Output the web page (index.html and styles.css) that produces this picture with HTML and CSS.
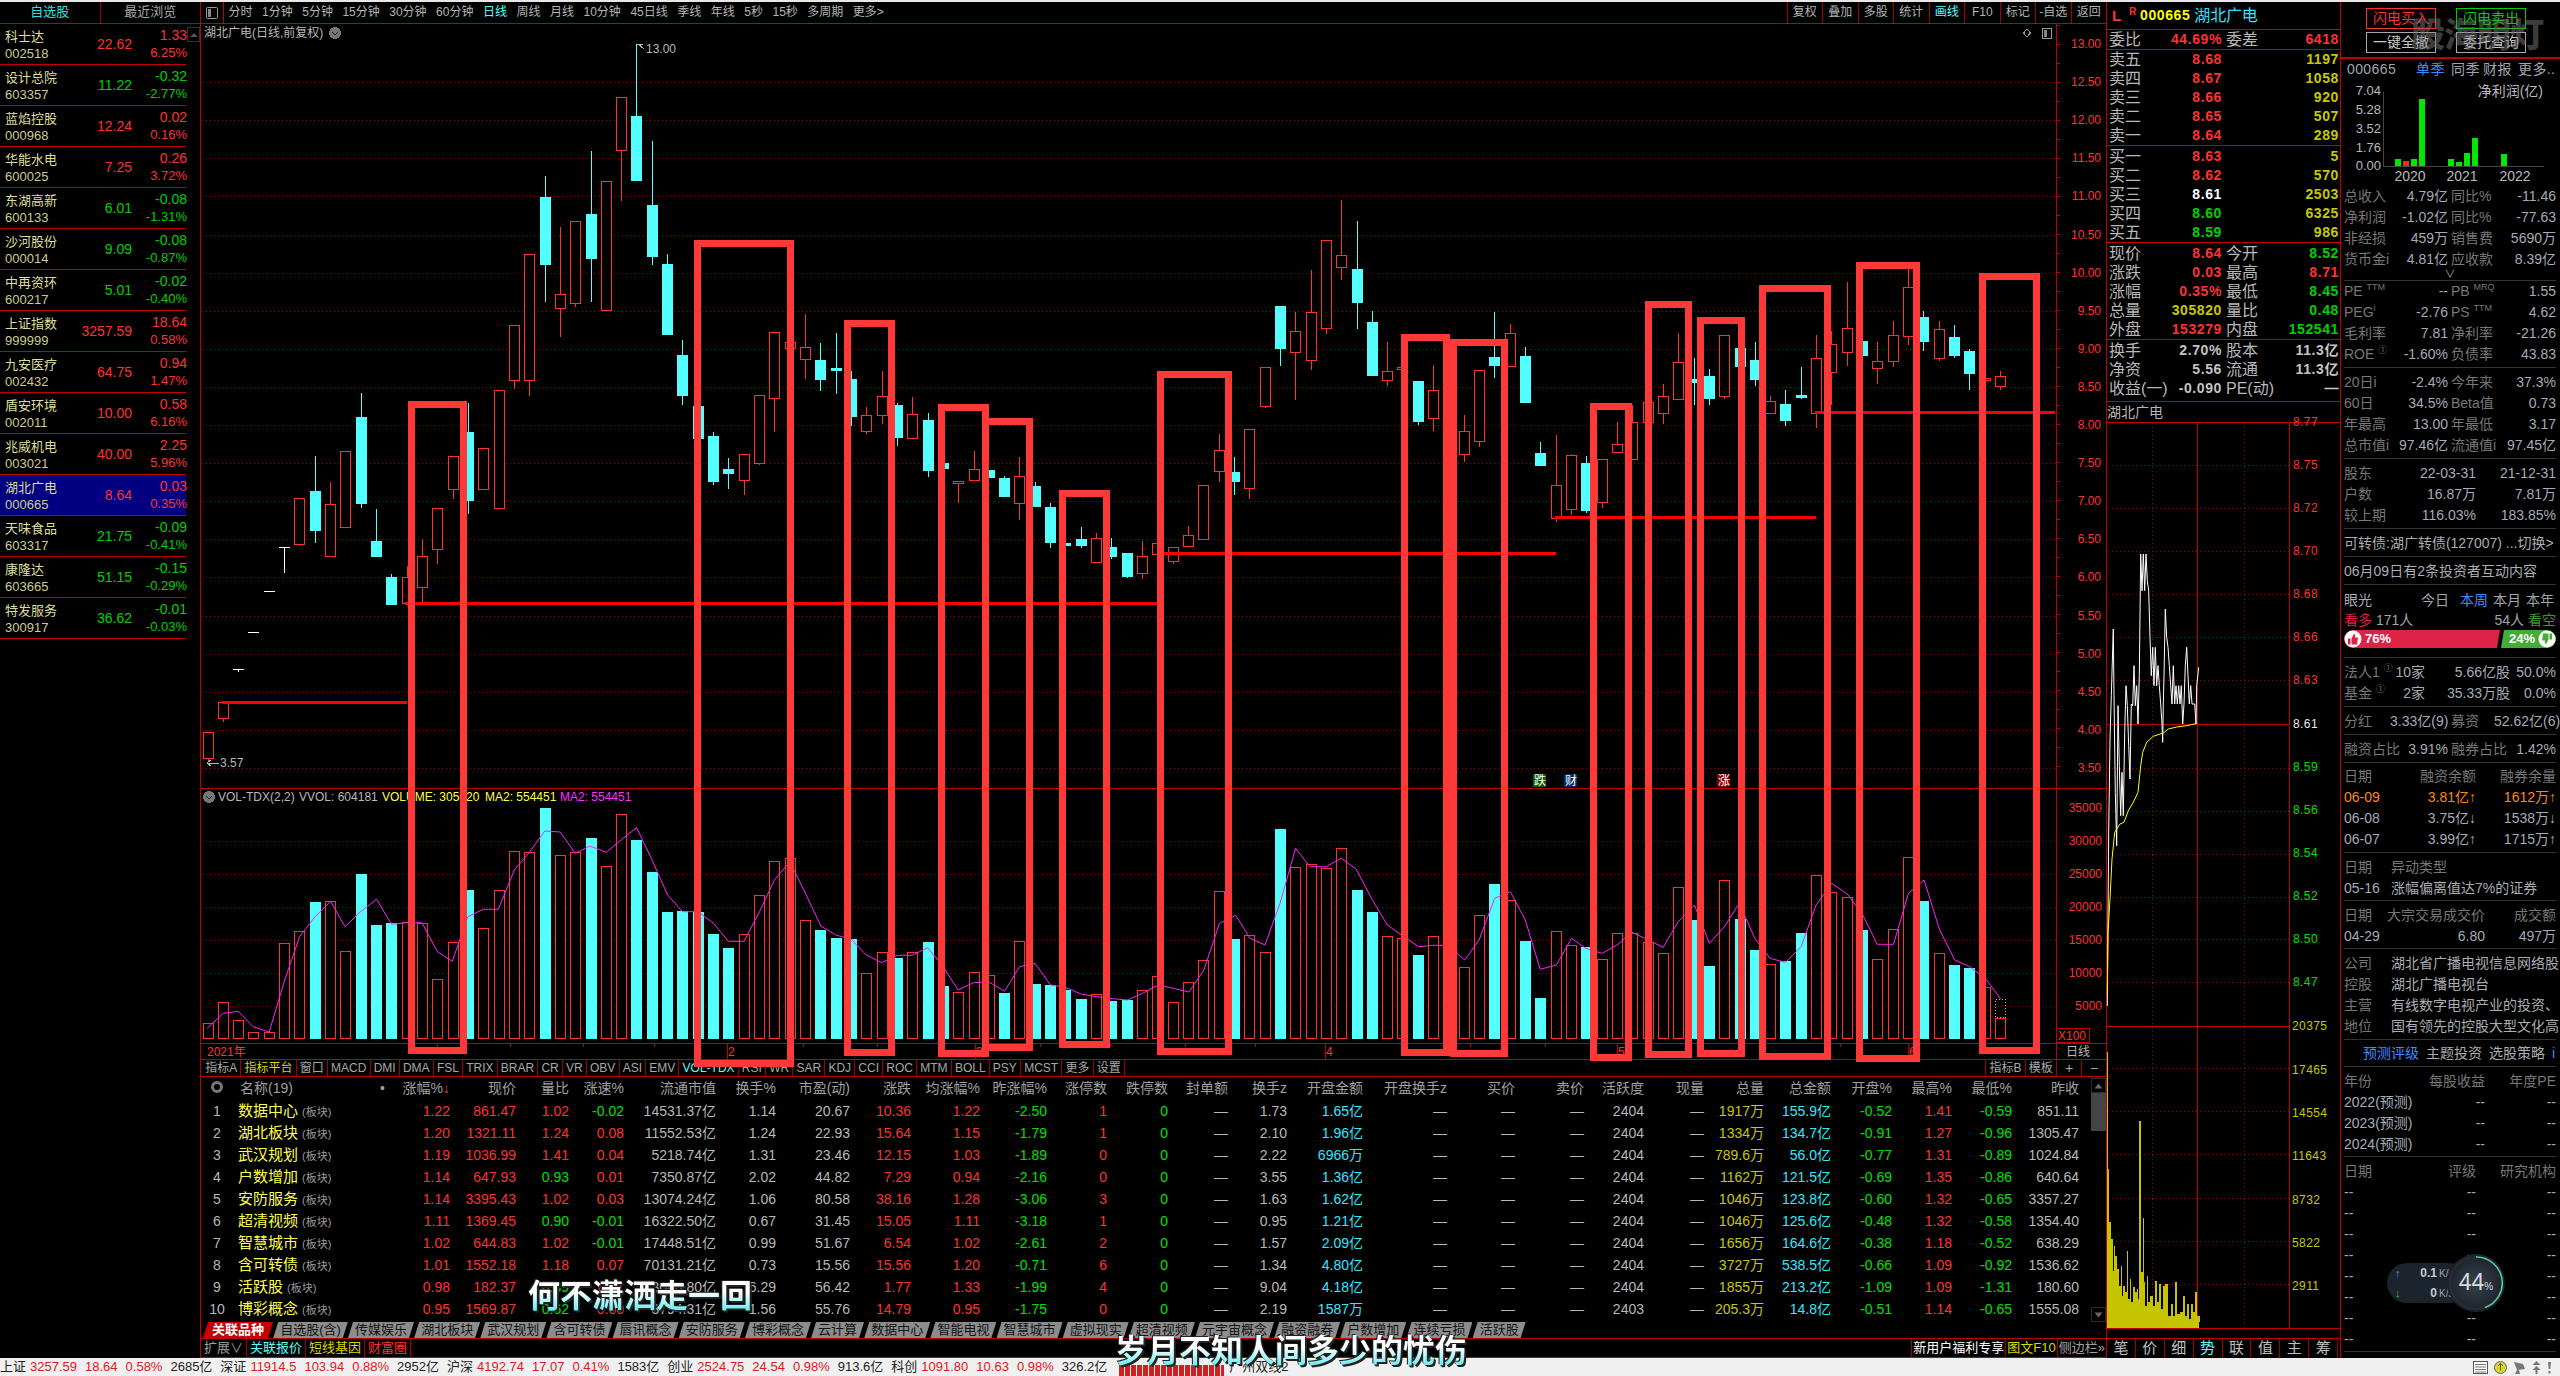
FILE: index.html
```html
<!DOCTYPE html>
<html lang="zh-CN">
<head>
<meta charset="utf-8">
<title>湖北广电 000665</title>
<link rel="stylesheet" href="styles.css">
</head>
<body>
<div class="app">
  <div class="topline"></div>
  <div class="main">
    <aside class="watch">
      <div class="watch-head"><span class="on">自选股</span><span>最近浏览</span></div>
      <div class="watch-body">
        <div class="wr"><div class="wn"><i>科士达</i><u>002518</u></div><b class="r">22.62</b><div class="wc r"><em>1.33</em><s>6.25%</s></div></div>
        <div class="wr"><div class="wn"><i>设计总院</i><u>603357</u></div><b class="g">11.22</b><div class="wc g"><em>-0.32</em><s>-2.77%</s></div></div>
        <div class="wr"><div class="wn"><i>蓝焰控股</i><u>000968</u></div><b class="r">12.24</b><div class="wc r"><em>0.02</em><s>0.16%</s></div></div>
        <div class="wr"><div class="wn"><i>华能水电</i><u>600025</u></div><b class="r">7.25</b><div class="wc r"><em>0.26</em><s>3.72%</s></div></div>
        <div class="wr"><div class="wn"><i>东湖高新</i><u>600133</u></div><b class="g">6.01</b><div class="wc g"><em>-0.08</em><s>-1.31%</s></div></div>
        <div class="wr"><div class="wn"><i>沙河股份</i><u>000014</u></div><b class="g">9.09</b><div class="wc g"><em>-0.08</em><s>-0.87%</s></div></div>
        <div class="wr"><div class="wn"><i>中再资环</i><u>600217</u></div><b class="g">5.01</b><div class="wc g"><em>-0.02</em><s>-0.40%</s></div></div>
        <div class="wr"><div class="wn"><i>上证指数</i><u>999999</u></div><b class="r">3257.59</b><div class="wc r"><em>18.64</em><s>0.58%</s></div></div>
        <div class="wr"><div class="wn"><i>九安医疗</i><u>002432</u></div><b class="r">64.75</b><div class="wc r"><em>0.94</em><s>1.47%</s></div></div>
        <div class="wr"><div class="wn"><i>盾安环境</i><u>002011</u></div><b class="r">10.00</b><div class="wc r"><em>0.58</em><s>6.16%</s></div></div>
        <div class="wr"><div class="wn"><i>兆威机电</i><u>003021</u></div><b class="r">40.00</b><div class="wc r"><em>2.25</em><s>5.96%</s></div></div>
        <div class="wr sel"><div class="wn"><i>湖北广电</i><u>000665</u></div><b class="r">8.64</b><div class="wc r"><em>0.03</em><s>0.35%</s></div></div>
        <div class="wr"><div class="wn"><i>天味食品</i><u>603317</u></div><b class="g">21.75</b><div class="wc g"><em>-0.09</em><s>-0.41%</s></div></div>
        <div class="wr"><div class="wn"><i>康隆达</i><u>603665</u></div><b class="g">51.15</b><div class="wc g"><em>-0.15</em><s>-0.29%</s></div></div>
        <div class="wr"><div class="wn"><i>特发服务</i><u>300917</u></div><b class="g">36.62</b><div class="wc g"><em>-0.01</em><s>-0.03%</s></div></div>
      </div>
      <div class="mini-scroll"><svg width="10" height="6" viewBox="0 0 10 6"><path d="M1 5l4-4 4 4z" fill="#555"/></svg></div>
    </aside>

    <section class="center">
      <div class="toolbar">
        <div class="tb-left">
          <span class="tb-toggle"><svg width="12" height="12" viewBox="0 0 12 12"><rect x=".5" y=".5" width="11" height="11" rx="1" fill="none" stroke="#999"/><rect x="2" y="2" width="3" height="8" fill="#888"/></svg></span>
          <span>分时</span><span>1分钟</span><span>5分钟</span><span>15分钟</span><span>30分钟</span><span>60分钟</span><span class="on">日线</span><span>周线</span><span>月线</span><span>10分钟</span><span>45日线</span><span>季线</span><span>年线</span><span>5秒</span><span>15秒</span><span>多周期</span><span>更多&gt;</span>
        </div>
        <div class="tb-right"><span>复权</span><span>叠加</span><span>多股</span><span>统计</span><span class="on">画线</span><span>F10</span><span>标记</span><span>-自选</span><span>返回</span></div>
      </div>
      <svg id="chart" class="chart" width="1906" height="1035" viewBox="201 24 1906 1035"></svg>
      <div class="indtabs">
        <div class="ind-left"><span>指标A</span><span class="y">指标平台</span><span>窗口</span><span>MACD</span><span>DMI</span><span>DMA</span><span>FSL</span><span>TRIX</span><span>BRAR</span><span>CR</span><span>VR</span><span>OBV</span><span>ASI</span><span>EMV</span><span class="c">VOL-TDX</span><span>RSI</span><span>WR</span><span>SAR</span><span>KDJ</span><span>CCI</span><span>ROC</span><span>MTM</span><span>BOLL</span><span>PSY</span><span>MCST</span><span>更多</span><span>设置</span></div>
        <div class="ind-right"><span>指标B</span><span>模板</span><span class="pm">+</span><span class="pm">−</span></div>
      </div>
      <div class="tbl">
        <div id="rows" class="rows"></div>
        <div class="sb"><span class="sb-btn"><svg width="9" height="6" viewBox="0 0 9 6"><path d="M.5 5.5l4-5 4 5z" fill="#666"/></svg></span><span class="sb-thumb"></span><span class="sb-fill"></span><span class="sb-btn"><svg width="9" height="6" viewBox="0 0 9 6"><path d="M.5 .5l4 5 4-5z" fill="#666"/></svg></span></div>
      </div>
      <div class="sheet"><span class="act">关联品种</span><span>自选股(含)</span><span>传媒娱乐</span><span>湖北板块</span><span>武汉规划</span><span>含可转债</span><span>唇讯概念</span><span>安防服务</span><span>博彩概念</span><span>云计算</span><span>数据中心</span><span>智能电视</span><span>智慧城市</span><span>虚拟现实</span><span>超清视频</span><span>元宇宙概念</span><span>融资融券</span><span>户数增加</span><span>连续亏损</span><span>活跃股</span></div>
      <div class="lower">
        <div class="low-left"><span>扩展∨</span><span class="c">关联报价</span><span class="y">短线基因</span><span class="r">财富圈</span></div>
        <div class="low-right"><span class="w">新用户福利专享</span><span class="y box">图文F10</span><span>侧边栏»</span></div>
      </div>
    </section>

    <section class="quote">
      <div class="q-title"><em>L</em><sup>R</sup><b>000665</b><span>湖北广电</span></div>
      <div class="q-sec q-wb"><div class="qr"><span>委比</span><b class="r">44.69%</b><span>委差</span><b class="r">6418</b></div></div>
      <div class="q-sec">
        <div class="qr"><span>卖五</span><b class="r">8.68</b><span></span><b class="ye">1197</b></div>
        <div class="qr"><span>卖四</span><b class="r">8.67</b><span></span><b class="ye">1058</b></div>
        <div class="qr"><span>卖三</span><b class="r">8.66</b><span></span><b class="ye">920</b></div>
        <div class="qr"><span>卖二</span><b class="r">8.65</b><span></span><b class="ye">507</b></div>
        <div class="qr"><span>卖一</span><b class="r">8.64</b><span></span><b class="ye">289</b></div>
      </div>
      <div class="q-sec q-pad">
        <div class="qr"><span>买一</span><b class="r">8.63</b><span></span><b class="ye">5</b></div>
        <div class="qr"><span>买二</span><b class="r">8.62</b><span></span><b class="ye">570</b></div>
        <div class="qr"><span>买三</span><b class="w">8.61</b><span></span><b class="ye">2503</b></div>
        <div class="qr"><span>买四</span><b class="g">8.60</b><span></span><b class="ye">6325</b></div>
        <div class="qr"><span>买五</span><b class="g">8.59</b><span></span><b class="ye">986</b></div>
      </div>
      <div class="q-sec q-pad">
        <div class="qr"><span>现价</span><b class="r">8.64</b><span>今开</span><b class="g">8.52</b></div>
        <div class="qr"><span>涨跌</span><b class="r">0.03</b><span>最高</span><b class="r">8.71</b></div>
        <div class="qr"><span>涨幅</span><b class="r">0.35%</b><span>最低</span><b class="g">8.45</b></div>
        <div class="qr"><span>总量</span><b class="ye">305820</b><span>量比</span><b class="g">0.48</b></div>
        <div class="qr"><span>外盘</span><b class="r">153279</b><span>内盘</span><b class="g">152541</b></div>
      </div>
      <div class="q-sec q-last">
        <div class="qr"><span>换手</span><b class="n">2.70%</b><span>股本</span><b class="n">11.3亿</b></div>
        <div class="qr"><span>净资</span><b class="n">5.56</b><span>流通</span><b class="n">11.3亿</b></div>
        <div class="qr"><span>收益(一)</span><b class="n">-0.090</b><span>PE(动)</span><b class="n">—</b></div>
      </div>
      <div class="q-head">湖北广电</div>
      <svg id="ticks" class="ticks" width="233" height="915" viewBox="2107 424 233 915"></svg>
      <div class="q-tabs"><span>笔</span><span>价</span><span>细</span><span class="c">势</span><span>联</span><span>值</span><span>主</span><span>筹</span></div>
    </section>

    <aside class="info">
      <div class="btns">
        <span class="btn br">闪电买入</span><span class="btn bg">闪电卖出</span><span class="btn bn">一键全撤</span><span class="btn bn">委托查询</span>
      </div>
      <div class="sec s1">
        <div class="fin-head"><span>000665</span><span class="blue">单季</span><span>同季</span><span>财报</span><span>更多..</span></div>
        <svg class="fin" width="219" height="105" viewBox="2341 81 219 105">
          <g class="fin-y"><text x="2381" y="95">7.04</text><text x="2381" y="114">5.28</text><text x="2381" y="133">3.52</text><text x="2381" y="152">1.76</text><text x="2381" y="170">0.00</text></g>
          <text class="fin-t" x="2543" y="96">净利润(亿)</text>
          <path class="fin-ax" d="M2383.5 92V166.5H2544"/>
          <g class="fin-b"><rect x="2395" y="159" width="6" height="7"/><rect class="neg" x="2403" y="161" width="6" height="5"/><rect x="2411" y="159" width="6" height="7"/><rect x="2419" y="99" width="6" height="67"/><rect x="2448" y="159" width="6" height="7"/><rect x="2456" y="162" width="6" height="4"/><rect x="2464" y="153" width="6" height="13"/><rect x="2472" y="138" width="6" height="28"/><rect x="2501" y="154" width="6" height="12"/></g>
          <g class="fin-x"><text x="2410" y="181">2020</text><text x="2462" y="181">2021</text><text x="2515" y="181">2022</text></g>
        </svg>
        <div class="ir"><i>总收入</i><b>4.79亿</b><i>同比%</i><b>-11.46</b></div>
        <div class="ir"><i>净利润</i><b>-1.02亿</b><i>同比%</i><b>-77.63</b></div>
        <div class="ir"><i>非经损</i><b>459万</b><i>销售费</i><b>5690万</b></div>
        <div class="ir"><i>货币金i</i><b>4.81亿</b><i>应收款</i><b>8.39亿</b></div>
        <div class="chev">∨</div>
      </div>
      <div class="sec s2">
        <div class="ir"><i>PE <sup>TTM</sup></i><b>--</b><i>PB <sup>MRQ</sup></i><b>1.55</b></div>
        <div class="ir"><i>PEG<sup>i</sup></i><b>-2.76</b><i>PS <sup>TTM</sup></i><b>4.62</b></div>
        <div class="ir"><i>毛利率</i><b>7.81</b><i>净利率</i><b>-21.26</b></div>
        <div class="ir"><i>ROE <sup>①</sup></i><b>-1.60%</b><i>负债率</i><b>43.83</b></div>
      </div>
      <div class="sec">
        <div class="ir"><i>20日i</i><b>-2.4%</b><i>今年来</i><b>37.3%</b></div>
        <div class="ir"><i>60日</i><b>34.5%</b><i>Beta值</i><b>0.73</b></div>
        <div class="ir"><i>年最高</i><b>13.00</b><i>年最低</i><b>3.17</b></div>
        <div class="ir"><i>总市值i</i><b>97.46亿</b><i>流通值i</i><b>97.45亿</b></div>
      </div>
      <div class="sec">
        <div class="i3"><i>股东</i><b>22-03-31</b><b>21-12-31</b></div>
        <div class="i3"><i>户数</i><b>16.87万</b><b>7.81万</b></div>
        <div class="i3"><i>较上期</i><b>116.03%</b><b>183.85%</b></div>
      </div>
      <div class="sec"><div class="line lt">可转债:湖广转债(127007) ...切换&gt;</div></div>
      <div class="sec"><div class="line lt">06月09日有2条投资者互动内容</div></div>
      <div class="sec s7">
        <div class="eye"><span class="lt">眼光</span><span class="eye-tabs"><span>今日</span><span class="blue">本周</span><span>本月</span><span>本年</span></span></div>
        <div class="eye2"><span><em class="bull">看多</em> 171人</span><span>54人 <em class="bear">看空</em></span></div>
        <div class="vote">
          <div class="vote-l"><svg width="18" height="18" viewBox="0 0 18 18"><circle cx="9" cy="9" r="8.5" fill="#fff"/><path d="M4 8.5h2.5v6H4zM7.5 8.5l2.5-4.500q1.500 0 1.200 2L10.800 7.500H14l-1 7H7.500z" fill="#dc2345"/></svg>76%</div>
          <div class="vote-r">24%<svg width="18" height="18" viewBox="0 0 18 18"><circle cx="9" cy="9" r="8.500" fill="#fff"/><path d="M14 9.500h-2.500v-6H14zM10.500 9.500l-2.500 4.500q-1.500 0-1.200-2l.4-1.500H4l1-7h5.500z" fill="#45ad37"/></svg></div>
        </div>
      </div>
      <div class="sec">
        <div class="i5"><i>法人1 <sup>①</sup></i><b>10家</b><b>5.66亿股</b><b>50.0%</b></div>
        <div class="i5"><i>基金 <sup>①</sup></i><b>2家</b><b>35.33万股</b><b>0.0%</b></div>
      </div>
      <div class="sec"><div class="ir"><i>分红</i><b>3.33亿(9)</b><i>募资</i><b>52.62亿(6)</b></div></div>
      <div class="sec"><div class="iw"><i>融资占比</i><b>3.91%</b><i>融券占比</i><b>1.42%</b></div></div>
      <div class="sec s11">
        <div class="i3"><i>日期</i><i class="ra">融资余额</i><i class="ra">融券余量</i></div>
        <div class="i3 or"><b>06-09</b><b>3.81亿↑</b><b>1612万↑</b></div>
        <div class="i3"><b class="la">06-08</b><b>3.75亿↓</b><b>1538万↓</b></div>
        <div class="i3"><b class="la">06-07</b><b>3.99亿↑</b><b>1715万↑</b></div>
      </div>
      <div class="sec s12">
        <div class="il"><i>日期</i><i>异动类型</i></div>
        <div class="il"><b>05-16</b><span class="lt">涨幅偏离值达7%的证券</span></div>
      </div>
      <div class="sec s12">
        <div class="i4"><i>日期</i><i class="ra">大宗交易成交价</i><i class="ra">成交额</i></div>
        <div class="i4"><b class="la">04-29</b><b>6.80</b><b>497万</b></div>
      </div>
      <div class="sec">
        <div class="il"><i>公司</i><span class="lt">湖北省广播电视信息网络股..</span></div>
        <div class="il"><i>控股</i><span class="lt">湖北广播电视台</span></div>
        <div class="il"><i>主营</i><span class="lt">有线数字电视产业的投资、..</span></div>
        <div class="il"><i>地位</i><span class="lt">国有领先的控股大型文化高..</span></div>
      </div>
      <div class="sec s15"><div class="rate"><span class="blue">预测评级</span><span>主题投资</span><span>选股策略</span><span class="blue">i</span></div></div>
      <div class="sec s16">
        <div class="i4"><i>年份</i><i class="ra">每股收益</i><i class="ra">年度PE</i></div>
        <div class="i4"><b class="la">2022(预测)</b><b>--</b><b>--</b></div>
        <div class="i4"><b class="la">2023(预测)</b><b>--</b><b>--</b></div>
        <div class="i4"><b class="la">2024(预测)</b><b>--</b><b>--</b></div>
      </div>
      <div class="sec s16">
        <div class="i3"><i>日期</i><i class="ra">评级</i><i class="ra">研究机构</i></div>
        <div class="i3"><b class="la">--</b><b>--</b><b>--</b></div>
        <div class="i3"><b class="la">--</b><b>--</b><b>--</b></div>
        <div class="i3"><b class="la">--</b><b>--</b><b>--</b></div>
        <div class="i3"><b class="la">--</b><b>--</b><b>--</b></div>
        <div class="i3"><b class="la">--</b><b>--</b><b>--</b></div>
        <div class="i3"><b class="la">--</b><b>--</b><b>--</b></div>
        <div class="i3"><b class="la">--</b><b>--</b><b>--</b></div>
        <div class="i3"><b class="la">--</b><b>--</b><b>--</b></div>
      </div>
    </aside>
  </div>
  <footer class="status">
    <span class="idx">上证</span><span class="num">3257.59</span><span class="num">18.64</span><span class="num">0.58%</span><span class="vol">2685亿</span>
    <span class="idx">深证</span><span class="num">11914.5</span><span class="num">103.94</span><span class="num">0.88%</span><span class="vol">2952亿</span>
    <span class="idx">沪深</span><span class="num">4192.74</span><span class="num">17.07</span><span class="num">0.41%</span><span class="vol">1583亿</span>
    <span class="idx">创业</span><span class="num">2524.75</span><span class="num">24.54</span><span class="num">0.98%</span><span class="vol">913.6亿</span>
    <span class="idx">科创</span><span class="num">1091.80</span><span class="num">10.63</span><span class="num">0.98%</span><span class="vol">326.2亿</span>
    <span class="led"></span><span class="srv">广州双线2</span>
    <span class="st-icons">
      <svg width="15" height="13" viewBox="0 0 15 13"><rect x=".5" y=".5" width="14" height="12" fill="#fff" stroke="#555"/><path d="M2 3.500h11M2 6h11M2 8.500h11M2 11h11" stroke="#777"/></svg>
      <svg width="13" height="13" viewBox="0 0 13 13"><circle cx="6.500" cy="6.500" r="6" fill="#d8d830" stroke="#666"/><path d="M6.500 2.500v7M4 5l2.500-2.500L9 5" stroke="#555" fill="none"/></svg>
      <svg width="13" height="13" viewBox="0 0 13 13"><path d="M1 1l9 2 2 5-8 1z" fill="#777"/><path d="M4 9l-2 4h5L6 9z" fill="#777"/></svg>
      <svg width="9" height="13" viewBox="0 0 9 13"><path d="M4.500 0l4 4h-8zM4.500 5l4 4h-8z" fill="#777"/><rect x="3.500" y="9" width="2" height="4" fill="#777"/></svg>
      <svg width="5" height="13" viewBox="0 0 5 13"><path d="M1 1h3l-.7 7H1.700zM1.500 10h2v2.500h-2z" fill="#777"/></svg>
    </span>
  </footer>
  <svg id="overlay" class="overlay" width="2560" height="1376" viewBox="0 0 2560 1376"></svg>
  <div class="wm">股海明灯</div>
  <div class="net">
    <div class="net-pill"><div><em class="up">↑</em><b>0.1</b><small>K/s</small></div><div><em class="dn">↓</em><b>0</b><small>K/s</small></div></div>
    <div class="net-ring"><svg width="58" height="58" viewBox="0 0 58 58"><circle cx="29" cy="29" r="26" fill="none" stroke="#2a3038" stroke-width="1.500"/><path d="M29 3A26 26 0 0 1 38 53.500" fill="none" stroke="#5fc9a8" stroke-width="1.500"/></svg><span>44<small>%</small></span></div>
  </div>
  <div class="sub sub1">何不潇洒走一回</div>
  <div class="sub sub2">岁月不知人间多少的忧伤</div>
</div>
<script src="chart.js"></script>
</body>
</html>
```

FILE: styles.css
```css
*{box-sizing:border-box;margin:0;padding:0}
html,body{width:2560px;height:1376px;overflow:hidden;background:#000}
body{font:14px/1.2 "Liberation Sans","Noto Sans CJK SC",sans-serif;color:#b4b4b4}
i,em,u,s,b{font-style:normal;font-weight:400;text-decoration:none}
.app{position:relative;width:2560px;height:1376px;display:flex;flex-direction:column}
.topline{height:2px;background:#e8e8e8;flex:none}
.main{height:1356px;display:flex;flex:none}
.r{color:#ff3232}.g{color:#00d000}.c{color:#54ffff}.y{color:#d8d800}.ye{color:#c8c800}.w{color:#fff}.n{color:#c4c4c4}
.blue{color:#3c8cff}

/* watch list */
.watch{position:relative;width:201px;flex:none;border-right:1px solid #c00000}
.watch-head{height:22px;display:flex;border-bottom:1px solid #c00000;font-size:13px;line-height:20px;text-align:center}
.watch-head span{flex:1;color:#a8a8a8}
.watch-head span+span{border-left:1px solid #a00000}
.watch-head .on{color:#30e0e0}
.wr{width:186px;height:41px;display:grid;grid-template-columns:66px 61px 55px;padding:0 4px 0 5px;align-items:center;border-bottom:1px solid #c00000}
.wn,.wc{display:flex;flex-direction:column;line-height:17px;margin-top:2px}
.wc{margin-top:0;line-height:18px}
.wn i{font-size:13px;color:#dede9c}
.wn u{font-size:13px;color:#cccc90}
.wr b{font-size:14px;text-align:right;margin-top:1px}
.wc{text-align:right;font-size:14px}
.wc s{font-size:13px}
.sel{background:#000080}
.mini-scroll{position:absolute;left:187px;top:25px;width:13px;height:15px;border:1px solid #333;display:flex;align-items:center;justify-content:center}

/* centre */
.center{width:1906px;flex:none;border-right:1px solid #c00000;display:flex;flex-direction:column}
.toolbar{height:22px;flex:none;display:flex;justify-content:space-between;border-bottom:1px solid #c00000;font-size:12px;line-height:21px;color:#b4b4b4}
.tb-left{display:flex;gap:9.500px}
.tb-toggle{width:23px;display:flex;align-items:center;justify-content:center;border-right:1px solid #c00000;margin-right:-5px}
.tb-right{display:flex}
.tb-right span{width:35.500px;text-align:center;border-left:1px solid #a00000}
.on{color:#54ffff}
.chart{display:block;flex:none;shape-rendering:crispEdges}
.chart text{font:12px "Liberation Sans","Noto Sans CJK SC",sans-serif;shape-rendering:auto}
.chart .tr{fill:#ff3232;text-anchor:end}
.chart .tl{fill:#ff3232}
.chart .ty{fill:#c8c800}.chart .tw{fill:#b8b8b8}.chart .tm{fill:#ff30ff}.chart .tre{fill:#ff3232}.chart .ys{fill:#ffff40}
.chart .tb{fill:#fff}
.dot{stroke:#a80000;stroke-dasharray:1 3;fill:none}
.sol{stroke:#c00000;fill:none}
.wick-r{stroke:#ff3232}.wick-c{stroke:#54ffff}.wick-w{stroke:#fff}
.bar-r{fill:#000;stroke:#ff3232}.bar-c{fill:#54ffff}.bar-w{fill:#fff}
.mline{stroke:#ff0000;stroke-width:3}
.ma{fill:none;stroke:#ff20ff;shape-rendering:auto}
.dash-y{fill:none;stroke:#c8c800;stroke-dasharray:1 2}
.overlay{position:absolute;left:0;top:0;pointer-events:none}
.hbox{fill:none;stroke:#ff3838;stroke-width:7;shape-rendering:crispEdges}
.indtabs{height:18px;flex:none;display:flex;justify-content:space-between;border-top:1px solid #c00000;border-bottom:1px solid #c00000;font-size:12px;line-height:16px;color:#a8a8a8}
.ind-left{display:flex;padding-left:1px}
.ind-left span,.ind-right span{padding:0 3.150px;border-right:1px solid #a00000;white-space:nowrap}
.ind-right{display:flex}
.ind-right span{border-right:0;border-left:1px solid #a00000}
.ind-right .pm{width:25px;text-align:center;font-size:14px}
.tbl{height:245px;flex:none;display:flex}
.rows{width:1890px;flex:none}
.tr,.th{display:grid;grid-template-columns:32px 167px 50px 66px 53px 55px 92px 60px 74px 61px 69px 67px 60px 61px 60px 59px 76px 84px 68px 69px 60px 60px 60px 67px 61px 60px 60px 67px;text-align:right;white-space:nowrap;align-items:center}
.th{height:23px;font-size:14px;color:#a0a0a0;margin-bottom:0}
.tr{height:22px;font-size:14px;color:#b8b8b8}
.tr>:first-child,.th>:first-child{text-align:center}
.tname{text-align:left;padding-left:5px;color:#ffff50;font-size:15px}
.tname small{font-size:11px;color:#9a9a9a;margin-left:4px}
.th .tname{color:#a0a0a0;font-size:14px;display:flex;justify-content:space-between;padding:0 15px 0 7px}
.th .sort{color:#ff3232}
.gear{display:inline-block;width:12px;height:12px;border:3px solid #777;border-radius:50%}
.tg{color:#00e000}.tr .r{color:#ff3232}.tc{color:#30e8ff}.ty2{color:#c8c800}
.sb{width:15px;flex:none;display:flex;flex-direction:column;padding-top:1px;margin-bottom:0}
.sb-btn{height:15px;flex:none;border:1px solid #2c2c2c;display:flex;align-items:center;justify-content:center}
.sb-thumb{height:38px;flex:none;background:#444}
.sb-fill{flex:1}
.sheet{height:16px;flex:none;display:flex;padding-left:2px;font-size:13px;line-height:16px;color:#111}
.sheet span{background:#8c8c8c;padding:0 7px;margin-right:.15px;white-space:nowrap;clip-path:polygon(5px 0,100% 0,calc(100% - 5px) 100%,0 100%)}
.sheet .act{background:#c80000;color:#fff;font-weight:700;padding:0 9px}
.lower{height:20px;flex:none;display:flex;justify-content:space-between;border-top:1px solid #c00000;border-bottom:1px solid #c00000;font-size:13px;line-height:18px;color:#a0a0a0}
.low-left,.low-right{display:flex}
.low-left span{padding:0 3px;border-right:1px solid #a00000}
.low-right span{padding:0 1px;border-left:1px solid #a00000}
.low-right .box{padding:0 1px}

/* quote column */
.quote{width:234px;flex:none;border-right:1px solid #c00000;display:flex;flex-direction:column}
.q-title{height:28px;flex:none;display:flex;align-items:center;border-bottom:1px solid #c00000;padding-left:5px;color:#ff3232}
.q-title em{font-size:15px;font-weight:700;color:#ff3232;width:17px}
.q-title sup{font-size:10px;font-weight:700;width:11px;align-self:flex-start;margin-top:4px}
.q-title b{color:#ffff00;font-weight:700;font-size:14px;letter-spacing:.6px;margin-right:4px}
.q-title span{color:#30e0ff;font-size:16px;letter-spacing:-.2px}
.q-sec{flex:none;border-bottom:1px solid #c00000;padding-left:2px}
.q-wb{height:20px}
.q-pad{padding-top:1px}
.q-last{height:62px;padding-top:1px}
.qr{height:19px;display:grid;grid-template-columns:40px 73px 44px 73px;line-height:19px;white-space:nowrap}
.qr span{font-size:16px;color:#b8b8b8;line-height:19px}
.qr span:nth-child(3){padding-left:4px}
.qr b{font-size:14px;font-weight:700;letter-spacing:.6px;text-align:right}
.q-head{height:21px;flex:none;border-bottom:1px solid #c00000;font-size:14px;line-height:20px;color:#b8b8b8}
.ticks{display:block;flex:none;shape-rendering:crispEdges;overflow:visible}
.ticks text{font:12px "Liberation Sans",sans-serif;letter-spacing:.4px}
.ticks .tr2{fill:#ff3232}.ticks .tg2{fill:#00e000}.ticks .tw2{fill:#e8e8e8}.ticks .ty3{fill:#c8c800}
.tline{fill:none;stroke:#fff;shape-rendering:auto}
.yline{fill:none;stroke:#ffff00;shape-rendering:auto}
.yvol{fill:#c4c400;stroke:none}
.q-tabs{flex:1;display:flex;border-top:1px solid #c00000;font-size:15px;line-height:18px;text-align:center;padding-left:0}
.q-tabs span{width:28.900px;border-right:1px solid #a00000;color:#c0c0c0}
.q-tabs .c{color:#54ffff}

/* info column */
.info{width:219px;flex:none;padding:0 4px 0 3px;display:flex;flex-direction:column;font-size:14px;line-height:21px;color:#9fa6ae;white-space:nowrap}
.btns{height:57px;flex:none;margin:0 -4px 0 -3px;padding:6px 0 0 25px;display:grid;grid-template-columns:70px 70px;column-gap:20px;row-gap:3px;grid-auto-rows:21px;border-bottom:2px solid #c00000;font-size:14px}
.btn{border:1px solid;text-align:center;line-height:19px}
.br{border-color:#ff3232;color:#ff3232}.bg{border-color:#00d000;color:#00d000}.bn{border-color:#a8a8a8;color:#c8c8c8}
.sec{flex:none;border-bottom:1px solid #333;padding:4px 0 2px}
.s1{padding:0;height:222px}
.s2{padding-top:0}
.fin-head{height:22px;display:grid;grid-template-columns:69px 35px 32px 35px auto;padding-left:3px;font-size:14px;letter-spacing:.4px}
.fin{display:block;margin-left:-3px;shape-rendering:crispEdges}
.fin text{font:13px "Liberation Sans","Noto Sans CJK SC",sans-serif;fill:#b8b8c0}
.fin-y text{text-anchor:end}
.fin .fin-t{text-anchor:end;font-size:14px}
.fin-x text{text-anchor:middle;font-size:14px}
.fin-ax{fill:none;stroke:#444}
.fin-b rect{fill:#00e800}.fin-b .neg{fill:#e83000}
.chev{height:9px;line-height:9px;text-align:center;font-size:11px}
.ir,.i3,.i4,.i5,.iw,.il{height:21px;display:grid;white-space:nowrap}
.ir{grid-template-columns:46px 58px 46px 62px}
.ir i:nth-child(3),.iw i:nth-child(3){padding-left:3px}
.i3{grid-template-columns:40px 92px 80px}
.i4{grid-template-columns:40px 101px 71px}
.i5{grid-template-columns:45px 36px 85px 46px}
.iw{grid-template-columns:56px 48px 60px 48px}
.il{grid-template-columns:47px 1fr}
.sec i{color:#777;}
.sec b{color:#a3acb8;text-align:right;display:block}
.sec b.la,.il b{text-align:left}
.sec .ra{text-align:right}
.sec sup{font-size:9px;vertical-align:6px;line-height:0}
.or b{color:#ff8a00}
.or b:first-child{text-align:left}
.lt{color:#a8aeb4}
.line{height:21px}
.s7{padding:0;height:73px}
.eye{height:27px;padding-top:3px;display:flex;justify-content:space-between;align-items:center}
.eye-tabs{display:flex;gap:6px;font-size:14px;padding-right:3px}
.eye-tabs span{width:27px}
.eye-tabs span:first-child{margin-right:6px}
.eye2{height:17px;line-height:17px;display:flex;justify-content:space-between}
.bull{color:#d82040}.bear{color:#3a9a30}
.vote{height:18px;margin-top:1px;display:flex;gap:1px;font-size:13px;line-height:18px;font-weight:700;color:#fff}
.vote-l{width:159px;background:#dc2345;display:flex;align-items:center;gap:3px;border-radius:9px 0 0 9px;clip-path:polygon(0 0,100% 0,calc(100% - 3px) 100%,0 100%)}
.vote-r{flex:1;background:#45ad37;display:flex;align-items:center;justify-content:flex-end;gap:3px;padding-left:8px;border-radius:0 9px 9px 0;clip-path:polygon(3px 0,100% 0,100% 100%,0 100%)}
.s11{padding:3px 0 2px}
.s12{padding:4px 0 1px}
.s15{padding:3px 0 2px}
.s16{padding:4px 0 1px}
.rate{height:21px;display:flex;gap:7px;padding-left:19px;color:#a8aeb4}

/* status */
.status{height:18px;flex:none;background:#f0f0f0;display:flex;align-items:center;font-size:13px;line-height:18px;color:#222;white-space:nowrap}
.idx{margin-right:4px}
.num{color:#e01818;margin-right:8px}
.vol{margin-right:8px}
.led{width:105px;height:11px;margin:7px 0 0 4px;background:repeating-linear-gradient(90deg,#d02020 0 5px,#f0f0f0 5px 6px)}
.srv{margin-left:5px;color:#222}
.st-icons{margin-left:auto;display:flex;gap:6px;padding-right:8px;align-items:center}

/* overlays */
.wm{position:absolute;left:2411px;top:14px;font-size:34px;line-height:42px;font-weight:900;color:rgba(120,120,120,.5);letter-spacing:-1px}
.net{position:absolute;left:2387px;top:1254px;width:118px;height:58px}
.net-pill{position:absolute;left:0;top:9px;width:82px;height:40px;background:#1c232c;border-radius:20px;font-size:11px;color:#9aa4ae;display:flex;flex-direction:column;padding-left:8px}
.net-pill div{height:20px;display:grid;grid-template-columns:12px 32px auto;line-height:20px;align-items:baseline}
.net-pill b{font-size:12px;font-weight:700;color:#c8ccd0;text-align:right;padding-right:2px}
.net-pill small{font-size:10px}
.up{color:#3fa7e8}.dn{color:#3fc050}
.net-ring{position:absolute;left:60px;top:0;width:58px;height:58px;border-radius:50%;background:radial-gradient(circle,#36404c,#1a2028 75%);display:flex;align-items:center;justify-content:center;font-size:23px;color:#d8dce0}
.net-ring svg{position:absolute;left:0;top:0}
.net-ring small{font-size:10px}
.sub{position:absolute;font-size:32px;line-height:38px;font-weight:700;white-space:nowrap;color:transparent;background:linear-gradient(#fff 40%,#40e8f0);-webkit-background-clip:text;background-clip:text;filter:drop-shadow(2px 2px 0 #222) drop-shadow(-1px -1px 0 #222)}
.sub1{left:528px;top:1277px}
.sub2{left:1115px;top:1332px}
```

FILE: chart.js
```js
(function () {
  // candles: type, body top, body bottom, high, low (reference pixel rows)
  var K = [
    ['r',732,758,732,762],['r',702,718,702,722],['w',669,669,669,672],['w',632,632,632,632],['w',591,591,591,591],
    ['w',547,547,547,573],['r',498,544,498,546],['c',491,531,456,543],['r',504,556,482,557],['r',451,527,451,527],
    ['c',417,504,393,508],['c',541,557,509,557],['c',577,605,574,605],['r',577,603,566,605],['r',556,587,539,602],
    ['r',508,549,508,564],['r',456,489,456,499],['c',432,501,403,514],['r',448,489,448,489],['r',390,508,390,508],
    ['r',325,380,325,389],['r',254,380,254,396],['c',197,265,176,302],['r',294,308,227,337],['r',221,303,221,307],
    ['c',214,259,151,302],['r',181,310,181,310],['r',97,150,97,201],['c',116,181,44,181],['c',205,257,141,265],
    ['c',264,335,254,335],['c',355,396,340,405],['c',406,439,406,439],['c',436,482,432,485],['c',469,474,458,489],
    ['r',454,480,454,495],['r',395,463,395,465],['r',332,398,332,432],['r',342,348,342,348],['r',347,359,314,379],
    ['c',360,380,343,391],['c',368,371,333,394],['c',379,417,371,426],['r',415,431,407,434],['r',396,415,371,424],
    ['c',405,438,403,446],['r',414,438,397,438],['c',420,471,413,477],['c',463,469,463,469],['r',481,483,481,503],
    ['r',469,480,451,480],['c',470,478,470,478],['c',478,497,476,497],['r',476,503,457,520],['c',486,507,482,507],
    ['c',507,543,503,548],['c',543,546,543,546],['c',539,546,527,548],['r',538,562,533,562],['c',547,557,538,559],
    ['c',553,577,553,578],['r',556,573,541,579],['r',543,554,538,554],['r',547,561,547,564],['r',535,546,526,546],
    ['r',485,539,485,539],['r',450,471,434,482],['c',472,482,457,495],['r',429,488,429,499],['r',367,406,367,408],
    ['c',306,349,306,366],['r',331,352,312,400],['r',312,360,270,370],['r',240,328,240,334],['r',255,267,200,280],
    ['c',269,303,221,329],['c',322,376,311,376],['r',371,380,342,386],['r',367,369,367,369],['c',381,422,381,425],
    ['r',390,418,365,431],['c',390,431,390,431],['r',431,454,415,462],['r',370,441,370,447],['c',357,366,312,378],
    ['r',333,366,324,367],['c',356,403,347,403],['c',453,466,442,466],['r',485,518,435,522],['r',455,509,454,515],
    ['c',463,511,456,513],['r',459,502,459,508],['r',444,452,422,452],['r',422,459,405,459],['r',402,422,402,422],
    ['r',396,413,384,424],['r',362,399,333,400],['c',379,383,358,405],['c',376,399,369,405],['r',335,396,335,399],
    ['c',348,367,348,367],['c',360,380,342,386],['r',401,413,396,414],['c',404,421,390,426],['c',395,398,367,399],
    ['r',358,413,335,428],['r',344,372,331,405],['r',328,352,282,366],['c',341,356,341,356],['r',361,368,342,384],
    ['r',335,361,321,367],['r',287,336,269,345],['c',317,342,311,351],['r',329,358,321,361],['c',337,356,325,358],
    ['c',351,374,349,390],['r',378,380,378,380],['r',376,386,371,390]
  ];
  // volume bars: [top, type]
  var V = [[1023,'r'],[1002,'r'],[1020,'r'],[1032,'r'],[1032,'r'],[943,'r'],[931,'r'],[902,'c'],[901,'r'],[951,'r'],
    [874,'c'],[925,'c'],[923,'c'],[922,'r'],[923,'r'],[979,'r'],[942,'r'],[890,'c'],[928,'r'],[890,'r'],
    [851,'r'],[852,'r'],[808,'c'],[855,'r'],[852,'r'],[838,'c'],[866,'r'],[814,'r'],[840,'c'],[872,'c'],
    [912,'c'],[911,'c'],[912,'c'],[934,'c'],[948,'c'],[934,'r'],[895,'r'],[861,'r'],[858,'r'],[920,'r'],
    [930,'c'],[938,'c'],[939,'c'],[973,'r'],[952,'r'],[958,'c'],[952,'r'],[942,'c'],[986,'c'],[992,'r'],
    [972,'r'],[975,'r'],[993,'c'],[941,'r'],[984,'c'],[985,'c'],[990,'c'],[999,'c'],[994,'r'],[1001,'c'],
    [1000,'c'],[990,'r'],[976,'r'],[1002,'r'],[982,'r'],[960,'r'],[891,'r'],[939,'c'],[935,'r'],[952,'r'],
    [829,'c'],[867,'r'],[864,'r'],[868,'r'],[848,'r'],[890,'c'],[912,'c'],[936,'r'],[938,'r'],[955,'c'],
    [936,'r'],[954,'c'],[967,'r'],[915,'r'],[884,'c'],[900,'r'],[941,'c'],[998,'c'],[931,'r'],[945,'r'],
    [947,'c'],[959,'r'],[933,'r'],[933,'r'],[942,'r'],[953,'r'],[887,'r'],[920,'c'],[966,'c'],[880,'r'],
    [919,'c'],[950,'c'],[964,'r'],[961,'c'],[933,'c'],[875,'r'],[892,'r'],[897,'r'],[930,'c'],[959,'r'],
    [929,'r'],[857,'r'],[901,'c'],[953,'r'],[965,'c'],[968,'c'],[987,'r'],[1018,'r']];
  var MA = [[30,775],[58,730],[84,724],[110,770],[138,786],[165,630],[191,500],[218,440],[245,394],[270,470],[297,425],[325,388],[351,463],[377,458],[404,458],[431,545],[457,574],[484,440],[511,418],[537,418],[565,300],[591,247],[618,183],[645,186],[671,250],[697,228],[725,247],[751,210],[778,173],[805,270],[832,375],[858,425],[885,425],[912,460],[938,514],[965,514],[992,425],[1018,330],[1045,275],[1072,370],[1099,468],[1125,495],[1152,508],[1178,555],[1205,578],[1232,556],[1258,556],[1285,533],[1312,590],[1338,660],[1365,638],[1392,636],[1419,664],[1445,590],[1472,580],[1499,645],[1525,652],[1552,672]]
    .map(function (p) { return [190 + p[0] / 1.742, 770 + p[1] / 3]; })
    .concat([[10,680],[35,686],[58,690],[81,670],[105,645],[128,655],[152,666],[175,600],[199,460],[224,436],[246,505],[269,525],[292,400],[316,235],[338,290],[363,290],[386,265],[409,297],[434,390],[457,465],[480,497],[505,530],[527,526],[550,526],[576,570],[598,510],[622,385],[646,365],[669,450],[692,598],[717,585],[740,505],[762,535],[787,550],[810,525],[833,487],[858,510],[881,532],[904,455],[929,405],[952,520],[975,470],[998,400],[1022,505],[1045,565],[1069,577],[1093,530],[1116,405],[1140,340],[1164,372],[1188,435],[1210,523],[1235,523],[1258,370],[1282,330],[1306,480],[1329,570],[1352,590],[1376,625],[1400,688]]
    .map(function (p) { return [1090 + p[0] / 1.537, 770 + p[1] / 3]; }));

  var X = function (i) { return Math.round(207.5 + i * 15.32) + .5; };
  var h = [];
  var hl = function (y, x1, x2, c) { h.push('<path class="' + c + '" d="M' + x1 + ' ' + (y + .5) + 'H' + x2 + '"/>'); };
  var vl = function (x, y1, y2, c) { h.push('<path class="' + c + '" d="M' + (x + .5) + ' ' + y1 + 'V' + y2 + '"/>'); };
  var txt = function (x, y, s, c) { h.push('<text class="' + c + '" x="' + x + '" y="' + y + '">' + s + '</text>'); };

  // price grid + labels
  var i, y;
  for (i = 0; i <= 19; i++) {
    y = Math.round(44 + i * 38.1);
    if (i) hl(y, 202, 2056, 'dot');
    txt(2101, y + 4, (13 - i * .5).toFixed(2), 'tr');
  }
  for (i = 0; i < 40; i++) hl(25 + i * 19, 2056, 2060, 'sol');
  vl(2056, 24, 1059, 'sol');
  hl(788, 201, 2106, 'sol');
  hl(1043, 201, 2106, 'sol');
  // volume grid + labels
  [[808,35000],[841,30000],[874,25000],[907,20000],[940,15000],[973,10000],[1006,5000]].forEach(function (p, n) {
    if (n) hl(p[0], 202, 2056, 'dot');
    txt(2102, p[0] + 4, p[1], 'tr');
  });
  h.push('<rect class="sol" x="2056.5" y="1028.5" width="33" height="14"/>');
  txt(2058, 1040, 'X100', 'tl');

  // candles
  K.forEach(function (k, n) {
    var x = X(n), t = k[0], top = k[1], bot = k[2], hi = k[3], lo = k[4];
    if (t === 'w') {
      hl(top, x - 5.5, x + 5.5, 'wick-w');
      if (lo > bot) vl(x - .5, top, lo, 'wick-w');
      return;
    }
    if (hi < top) vl(x - .5, hi, top, 'wick-' + t);
    if (lo > bot) vl(x - .5, bot, lo, 'wick-' + t);
    if (t === 'r') h.push('<rect class="bar-r" x="' + (x - 5) + '" y="' + (top + .5) + '" width="10" height="' + Math.max(bot - top, 1) + '"/>');
    else h.push('<rect class="bar-c" x="' + (x - 5.5) + '" y="' + top + '" width="11" height="' + Math.max(bot - top, 2) + '"/>');
  });
  // drawn support lines
  [[222,407,702],[405,1159,603],[1157,1556,553],[1555,1816,517],[1815,2055,412]].forEach(function (l) {
    h.push('<path class="mline" d="M' + l[0] + ' ' + l[2] + 'H' + l[1] + '"/>');
  });
  // volume bars
  V.forEach(function (v, n) {
    var x = X(n);
    if (v[1] === 'r') h.push('<rect class="bar-r" x="' + (x - 5) + '" y="' + (v[0] + .5) + '" width="10" height="' + (1038 - v[0]) + '"/>');
    else h.push('<rect class="bar-c" x="' + (x - 5.5) + '" y="' + v[0] + '" width="11" height="' + (1039 - v[0]) + '"/>');
  });
  h.push('<rect class="dash-y" x="1995.5" y="999.5" width="10" height="18"/>');
  h.push('<polyline class="ma" points="' + MA.map(function (p) { return p[0].toFixed(1) + ',' + p[1].toFixed(1); }).join(' ') + '"/>');

  // chart captions
  txt(204, 37, '湖北广电(日线,前复权)', 'tw');
  h.push('<circle cx="335" cy="33" r="6" fill="#777"/><path d="M332 32l3 3 3-3" fill="none" stroke="#222"/>');
  h.push('<path d="M2027 29l3.500 4-3.500 4-3.500-4z" fill="none" stroke="#999"/><rect x="2042.500" y="28.500" width="9" height="10" fill="none" stroke="#999"/><rect x="2044" y="30" width="3" height="7" fill="#888"/>');
  h.push('<path d="M637 44h6M638 44l6 5" stroke="#b8b8b8" fill="none"/>');
  txt(646, 53, '13.00', 'tw');
  h.push('<path d="M207 763h12M207 763l4-3M207 763l4 3" stroke="#b8b8b8" fill="none"/>');
  txt(220, 767, '3.57', 'tw');
  // event badges
  [[1533,'跌','#006400'],[1564,'财','#002a66'],[1717,'涨','#800000']].forEach(function (b) {
    h.push('<rect x="' + b[0] + '" y="774" width="13" height="13" fill="' + b[2] + '"/>');
    h.push('<text class="tb" x="' + (b[0] + 1) + '" y="785">' + b[1] + '</text>');
  });
  // volume legend
  h.push('<circle cx="209" cy="797" r="6" fill="#777"/><path d="M206 796l3 3 3-3" fill="none" stroke="#222"/>');
  txt(218, 801, 'VOL-TDX(2,2)', 'tw');
  txt(299, 801, 'VVOL: 604181', 'tw');
  txt(382, 801, 'VOLUME: 305820', 'ys');
  txt(485, 801, 'MA2: 554451', 'ys');
  txt(560, 801, 'MA2: 554451', 'tm');
  // date strip
  txt(207, 1056, '2021年', 'tre');
  [[728,'2'],[976,'3'],[1326,'4'],[1618,'5'],[1909,'6']].forEach(function (d) {
    vl(d[0] - 1, 1043, 1059, 'sol');
    txt(d[0], 1056, d[1], 'tre');
  });
  [437,510,583,654,803,877,1040,1110,1185,1255,1470,1545,1765,1840].forEach(function (x) { vl(x, 1043, 1047, 'sol'); });
  vl(2056, 1043, 1059, 'sol');
  txt(2066, 1056, '日线', 'tw');
  document.getElementById('chart').innerHTML = h.join('');

  // annotation boxes, lying over everything
  var B = [[408,401,467,1054],[694,240,794,1067],[844,320,895,1056],[938,404,989,1057],[982,418,1033,1051],
    [1059,490,1110,1048],[1157,371,1232,1055],[1401,334,1450,1056],[1450,339,1508,1057],[1590,403,1632,1061],
    [1645,301,1692,1058],[1697,317,1745,1057],[1759,285,1831,1060],[1856,262,1920,1062],[1979,273,2040,1054]];
  document.getElementById('overlay').innerHTML = B.map(function (b) {
    return '<rect class="hbox" x="' + (b[0] + 3.5) + '" y="' + (b[1] + 3.5) + '" width="' + (b[2] - b[0] - 7) + '" height="' + (b[3] - b[1] - 7) + '"/>';
  }).join('');

  // intraday chart
  h = [];
  vl(2289, 424, 1329, 'sol');
  vl(2197, 424, 1329, 'sol');
  [2152, 2244].forEach(function (x) { h.push('<path class="dot" d="M' + (x + .5) + ' 424V1329"/>'); });
  [466,509,552,595,638,681,769,812,855,898,940,983,1069,1112,1155,1199,1242,1285].forEach(function (y) { hl(y, 2108, 2289, 'dot'); });
  hl(725, 2107, 2289, 'sol'); hl(1027, 2107, 2289, 'sol'); hl(1329, 2107, 2340, 'sol');
  var lab = [[427,'8.77','tr2'],[470,'8.75','tr2'],[513,'8.72','tr2'],[556,'8.70','tr2'],[599,'8.68','tr2'],[642,'8.66','tr2'],[685,'8.63','tr2'],[729,'8.61','tw2'],[772,'8.59','tg2'],[815,'8.56','tg2'],[858,'8.54','tg2'],[901,'8.52','tg2'],[944,'8.50','tg2'],[987,'8.47','tg2'],[1031,'20375','ty3'],[1075,'17465','ty3'],[1118,'14554','ty3'],[1161,'11643','ty3'],[1205,'8732','ty3'],[1248,'5822','ty3'],[1291,'2911','ty3']];
  lab.forEach(function (l) { txt(l[2] === 'ty3' ? 2292 : 2293, l[0], l[1], l[2]); });
  var yv = [[22,460],[24,810],[28,970],[34,1020],[38,1115],[42,1040],[46,1070],[50,850],[52,1110],[58,1160],[62,1100],[66,1190],[70,1160],[76,1180],[80,1055],[84,1200],[90,1140],[94,1210],[100,1165],[104,1180],[110,1170],[114,1200],[118,667],[122,1120],[128,958],[132,1150],[136,1220],[140,1130],[144,1210],[150,1190],[158,1220],[164,1145],[170,1210],[176,1155],[182,1230],[190,1160],[196,1155],[204,1250],[212,1215],[218,1250],[224,1150],[230,1245],[240,1240],[250,1190],[256,1250],[262,1215],[268,1260],[274,1215],[280,1240],[284,1180],[290,1200],[292,1250],[297,1250]];
  var pts = ['2107,1329'];
  yv.forEach(function (p, n) {
    var x = Math.round(2100 + p[0] / 3), y = Math.round(900 + p[1] / 3);
    var nx = n + 1 < yv.length ? Math.round(2100 + yv[n + 1][0] / 3) : x + 1;
    pts.push(x + ',' + y, nx + ',' + y);
  });
  pts.push('2199,1329');
  h.push('<polygon class="yvol" points="' + pts.join(' ') + '"/>');
  var map = function (a) { return a.map(function (p) { return (2100 + p[0] / 3).toFixed(1) + ',' + (400 + p[1] / 3).toFixed(1); }).join(' '); };
  h.push('<polyline class="tline" points="' + map([[22,1821],[26,1300],[30,1020],[34,890],[40,690],[42,890],[46,1180],[50,1340],[54,920],[58,1100],[62,1250],[66,1120],[70,1250],[74,1000],[78,860],[82,920],[86,1040],[90,1140],[94,915],[98,920],[102,800],[106,920],[110,860],[114,975],[118,830],[122,465],[126,575],[130,465],[134,575],[138,465],[142,545],[146,575],[150,715],[154,830],[158,745],[162,860],[166,745],[170,860],[174,800],[178,860],[182,915],[186,975],[188,1030],[190,915],[192,830],[196,630],[200,715],[204,745],[208,800],[212,860],[216,915],[220,800],[224,915],[228,860],[232,915],[236,860],[240,915],[244,860],[248,975],[252,915],[256,800],[260,745],[264,830],[268,915],[272,860],[276,915],[284,915],[288,975],[290,860],[296,805]]) + '"/>');
  h.push('<polyline class="yline" points="' + map([[22,1790],[24,1600],[30,1500],[36,1380],[44,1300],[60,1275],[72,1270],[85,1235],[100,1210],[114,1180],[122,1100],[128,1060],[140,1030],[160,1012],[190,1002],[205,990],[230,984],[260,980],[292,973]]) + '"/>');
  document.getElementById('ticks').innerHTML = h.join('');

  // table
  var H = ['涨幅%↓','现价','量比','涨速%','流通市值','换手%','市盈(动)','涨跌','均涨幅%','昨涨幅%','涨停数','跌停数','封单额','换手z','开盘金额','开盘换手z','买价','卖价','活跃度','现量','总量','总金额','开盘%','最高%','最低%','昨收'];
  var D = [
    ['数据中心','1.22','861.47','1.02','-0.02','14531.37亿','1.14','20.67','10.36','1.22','-2.50','1','0','1.73','1.65亿','2404','1917万','155.9亿','-0.52','1.41','-0.59','851.11'],
    ['湖北板块','1.20','1321.11','1.24','0.08','11552.53亿','1.24','22.93','15.64','1.15','-1.79','1','0','2.10','1.96亿','2404','1334万','134.7亿','-0.91','1.27','-0.96','1305.47'],
    ['武汉规划','1.19','1036.99','1.41','0.04','5218.74亿','1.31','23.46','12.15','1.03','-1.89','0','0','2.22','6966万','2404','789.6万','56.0亿','-0.77','1.31','-0.89','1024.84'],
    ['户数增加','1.14','647.93','0.93','0.01','7350.87亿','2.02','44.82','7.29','0.94','-2.16','0','0','3.55','1.36亿','2404','1162万','121.5亿','-0.69','1.35','-0.86','640.64'],
    ['安防服务','1.14','3395.43','1.02','0.03','13074.24亿','1.06','80.58','38.16','1.28','-3.06','3','0','1.63','1.62亿','2404','1046万','123.8亿','-0.60','1.32','-0.65','3357.27'],
    ['超清视频','1.11','1369.45','0.90','-0.01','16322.50亿','0.67','31.45','15.05','1.11','-3.18','1','0','0.95','1.21亿','2404','1046万','125.6亿','-0.48','1.32','-0.58','1354.40'],
    ['智慧城市','1.02','644.83','1.02','-0.01','17448.51亿','0.99','51.67','6.54','1.02','-2.61','2','0','1.57','2.09亿','2404','1656万','164.6亿','-0.38','1.18','-0.52','638.29'],
    ['含可转债','1.01','1552.18','1.18','0.07','70131.21亿','0.73','15.56','15.56','1.20','-0.71','6','0','1.34','4.80亿','2404','3727万','538.5亿','-0.66','1.09','-0.92','1536.62'],
    ['活跃股','0.98','182.37','0.89','0.11','3008.80亿','6.29','56.42','1.77','1.33','-1.99','4','0','9.04','4.18亿','2404','1855万','213.2亿','-1.09','1.09','-1.31','180.60'],
    ['博彩概念','0.95','1569.87','0.62','0.00','3794.31亿','1.56','55.76','14.79','0.95','-1.75','0','0','2.19','1587万','2403','205.3万','14.8亿','-0.51','1.14','-0.65','1555.08']
  ];
  var cell = function (v, c) { return '<span class="' + (c || '') + '">' + v + '</span>'; };
  var sign = function (v) { return parseFloat(v) < 0 ? 'tg' : 'r'; };
  var html = '<div class="th"><span><span class="gear"></span></span><span class="tname"><span>名称(19)</span><span>•</span></span>' +
    H.map(function (t) { return cell(t.replace('↓', '<em class="sort">↓</em>')); }).join('') + '</div>';
  D.forEach(function (d, n) {
    var r = '<div class="tr">' + cell(n + 1) + '<span class="tname">' + d[0] + '<small>(板块)</small></span>';
    r += cell(d[1], 'r') + cell(d[2], 'r') + cell(d[3], parseFloat(d[3]) < 1 ? 'tg' : 'r') + cell(d[4], sign(d[4]));
    r += cell(d[5]) + cell(d[6]) + cell(d[7]) + cell(d[8], 'r') + cell(d[9], 'r') + cell(d[10], 'tg') + cell(d[11], 'r') + cell(d[12], 'tg');
    r += cell('—') + cell(d[13]) + cell(d[14], 'tc') + cell('—') + cell('—') + cell('—') + cell(d[15]) + cell('—');
    r += cell(d[16], 'ty2') + cell(d[17], 'tc') + cell(d[18], 'tg') + cell(d[19], 'r') + cell(d[20], 'tg') + cell(d[21]);
    html += r + '</div>';
  });
  document.getElementById('rows').innerHTML = html;
})();
```
